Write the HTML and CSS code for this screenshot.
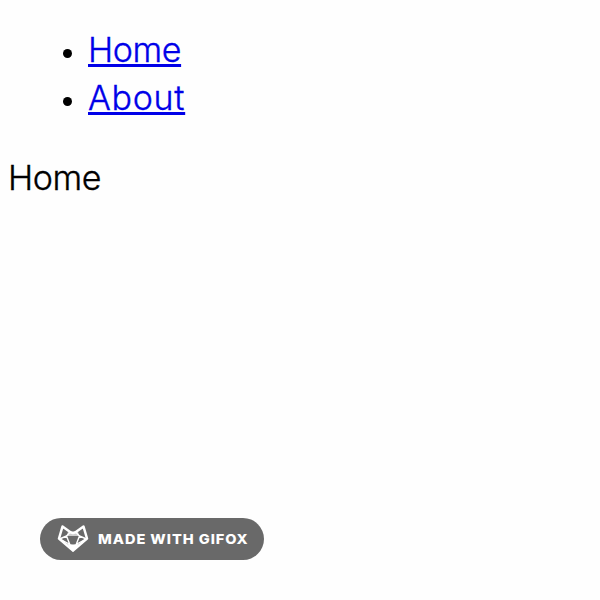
FILE: index.html
```html
<!DOCTYPE html>
<html lang="en">
<head>
<meta charset="utf-8">
<title>Home</title>
<link rel="stylesheet" href="styles.css">
</head>
<body>
<nav>
  <ul class="links">
    <li><a href="#home">Home</a></li>
    <li><a class="about" href="#about">About</a></li>
  </ul>
</nav>
<main class="content">Home</main>
<div class="badge">
  <svg class="fox" viewBox="0 0 32 30" aria-hidden="true">
    <path class="forehead" d="M11 8h10l1.500 4h-13z"/>
    <path class="outline" d="M5.500 2.500 13.500 8.200 16 9l2.500-.8 8-5.700L30 14.500 16 26.500 2 14.500Z"/>
    <path class="facets" d="M13 8.500 9.500 12 2.500 15M19 8.500 22.500 12 29.500 15M9.500 12 13 21M22.500 12 19 21M3 15 13 20.500M29 15 19 20.500"/>
    <path class="nose" d="m10.500 20 5.500 .5 5.500-.5L16 28Z"/>
  </svg>
  <span class="label">MADE WITH GIFOX</span>
</div>
</body>
</html>
```
FILE: styles.css
```css
body {
  margin: 0;
  min-height: 600px;
  background: #fefefe;
  color: #000;
  font: 300 34px/48px Inter, sans-serif;
  font-optical-sizing: none;
  font-variation-settings: "opsz" 14;
  letter-spacing: -0.4px;
  -webkit-text-stroke: 0.35px;
}

.links {
  margin: 0;
  padding: 26px 0 0 88px;
  list-style: none;
}

.links li::before {
  content: "";
  float: left;
  width: 9px;
  height: 9px;
  margin: 23px 0 0 -25px;
  border-radius: 50%;
  background: #000;
}

.links a {
  color: #0000e8;
  text-decoration-thickness: 3px;
  text-underline-offset: 2px;
  text-decoration-skip-ink: none;
}

.links .about {
  letter-spacing: 0.7px;
}

.content {
  padding: 32px 8px 0;
}

.badge {
  position: absolute;
  left: 40px;
  bottom: 40px;
  display: flex;
  align-items: center;
  box-sizing: border-box;
  width: 224px;
  height: 42px;
  padding-left: 17px;
  border-radius: 21px;
  background: #696969;
  color: #fff;
  font: 800 13.700px/20px Inter, sans-serif;
  letter-spacing: 0.9px;
  white-space: nowrap;
  -webkit-text-stroke: 0;
}

.label {
  transform: scaleX(1.065);
  transform-origin: left;
}

.fox {
  width: 32px;
  height: 30px;
  margin-right: 9px;
  fill: none;
  stroke: #fff;
  stroke-linejoin: round;
}

.outline {
  stroke-width: 2.5;
}

.facets {
  stroke-width: 1.4;
}

.forehead {
  fill: #ccc;
  stroke: none;
}

.nose {
  fill: #fff;
  stroke: none;
}
```
